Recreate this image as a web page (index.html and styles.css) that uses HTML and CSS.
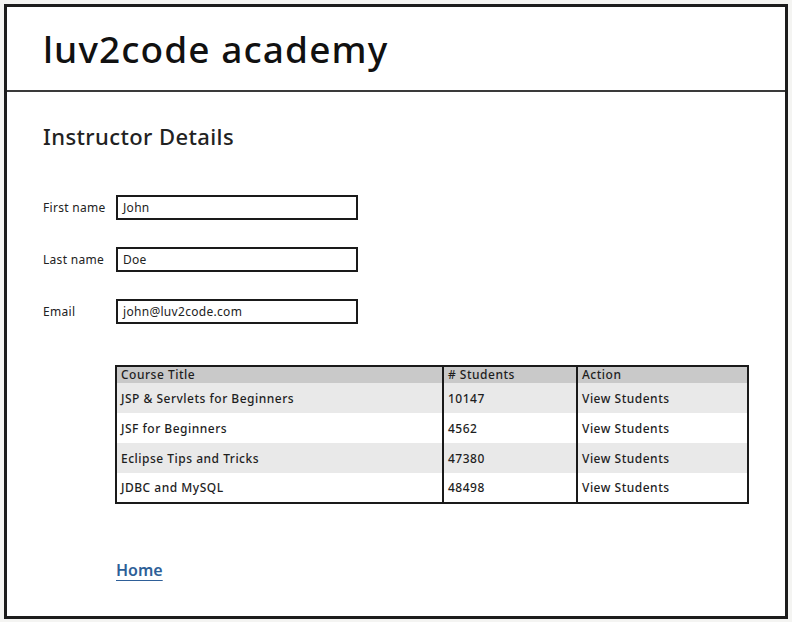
FILE: index.html
```html
<!DOCTYPE html>
<html>
<head>
<meta charset="utf-8">
<link rel="stylesheet" href="styles.css">
</head>
<body>
<div class="frame">
  <header class="header">
    <h1 class="brand">luv2code academy</h1>
  </header>
  <main class="content">
    <h2 class="page-title">Instructor Details</h2>
    <form class="form">
      <div class="row"><label class="label">First name</label><div class="input">John</div></div>
      <div class="row"><label class="label">Last name</label><div class="input">Doe</div></div>
      <div class="row"><label class="label">Email</label><div class="input">john@luv2code.com</div></div>
    </form>
    <table class="courses">
      <thead>
        <tr><th class="c1">Course Title</th><th class="c2"># Students</th><th class="c3">Action</th></tr>
      </thead>
      <tbody>
        <tr class="alt"><td>JSP &amp; Servlets for Beginners</td><td>10147</td><td>View Students</td></tr>
        <tr><td>JSF for Beginners</td><td>4562</td><td>View Students</td></tr>
        <tr class="alt"><td>Eclipse Tips and Tricks</td><td>47380</td><td>View Students</td></tr>
        <tr><td>JDBC and MySQL</td><td>48498</td><td>View Students</td></tr>
      </tbody>
    </table>
    <a class="home" href="#">Home</a>
  </main>
</div>
</body>
</html>
```

FILE: styles.css
```css
html, body {
  margin: 0;
  padding: 0;
  background: #f4f4f2;
}
body {
  font-family: "Noto Sans", "DejaVu Sans", sans-serif;
  color: #1a1a1a;
}
.frame {
  margin: 4px 0 0 4px;
  width: 784px;
  height: 615px;
  box-sizing: border-box;
  border: 3px solid #1c1c1c;
  background: #fff;
  display: flex;
  flex-direction: column;
}
.header {
  height: 85px;
  box-sizing: border-box;
  border-bottom: 2px solid #3a3a3a;
  display: flex;
  align-items: center;
  padding-left: 36px;
}
.brand {
  margin: 0;
  font-size: 37px;
  font-weight: 500;
  letter-spacing: 1.1px;
  color: #111;
}
.content {
  padding-left: 36px;
  display: flex;
  flex-direction: column;
}
.page-title {
  margin: 29px 0 0 0;
  font-size: 22px;
  font-weight: 500;
  letter-spacing: 0.4px;
  color: #222;
  line-height: 30px;
}
.form {
  margin-top: 44px;
  display: flex;
  flex-direction: column;
  gap: 27px;
}
.row {
  display: flex;
  align-items: center;
}
.label {
  width: 73px;
  font-size: 12px;
  letter-spacing: 0.3px;
  color: #222;
}
.input {
  width: 242px;
  height: 25px;
  box-sizing: border-box;
  border: 2px solid #1a1a1a;
  font-size: 12px;
  letter-spacing: 0.3px;
  padding-left: 5px;
  display: flex;
  align-items: center;
  color: #222;
}
.courses {
  margin: 41px 0 0 72px;
  width: 634px;
  border-collapse: collapse;
  border: 2px solid #1a1a1a;
  font-size: 12px;
  letter-spacing: 0.5px;
}
.courses th, .courses td {
  text-align: left;
  padding: 0 0 0 4px;
  font-weight: 500;
  color: #1e1e1e;
}
.courses th + th, .courses td + td {
  border-left: 2px solid #1a1a1a;
}
.courses thead tr {
  background: #c9c9c9;
  height: 16px;
}
.courses th {
  line-height: 16px;
}
.c1 { width: 321px; }
.c2 { width: 128px; }
.courses tbody tr {
  height: 30px;
  background: #fff;
}
.courses tbody tr.alt {
  background: #e9e9e9;
}
.home {
  margin: 55px 0 0 73px;
  align-self: flex-start;
  font-size: 16px;
  font-weight: 600;
  color: #2e5f98;
  text-decoration: underline;
  text-underline-offset: 4px;
}
```
